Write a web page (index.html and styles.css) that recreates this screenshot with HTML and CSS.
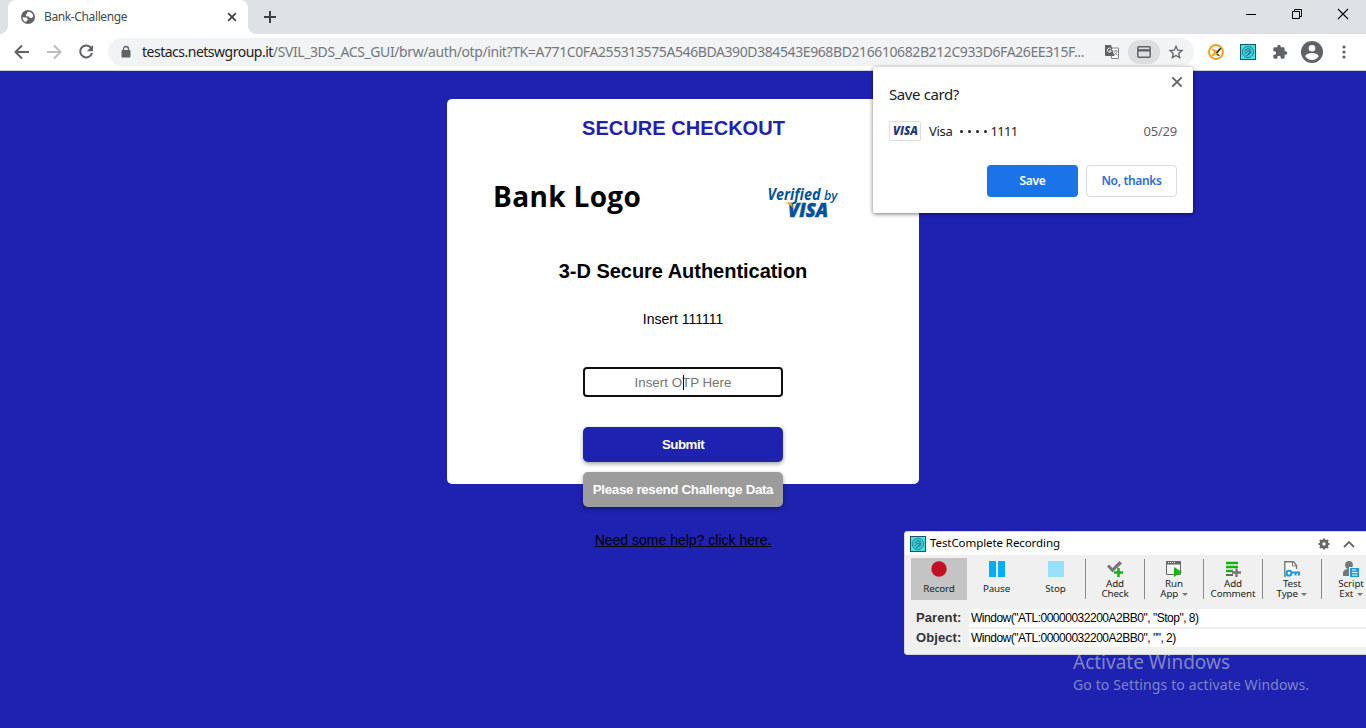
FILE: index.html
```html
<!DOCTYPE html>
<html lang="en">
<head>
<meta charset="utf-8">
<title>Bank-Challenge</title>
<link rel="stylesheet" href="styles.css">
</head>
<body>
<svg class="defs" width="0" height="0">
  <defs>
    <symbol id="hex" viewBox="0 0 16 16">
      <rect x=".5" y=".5" width="15" height="15" fill="#45e0e8" stroke="#17556b"/>
      <path d="M8 2.200l3.600 1 2 3-.2 3.800-2.400 2.800-3 1.200-3.300-1.200L2.500 10l-.2-3.600 2.200-3z" fill="#3fc8d3" stroke="#16798c" stroke-width=".8"/>
      <path d="M4.500 7l3.500-2.500L11 6M5 9.500L8 7l3 .5-3 2.500M6 12l5-3.200" fill="none" stroke="#14707f" stroke-width=".9"/>
    </symbol>
  </defs>
</svg>
<div class="screen">
  <header class="tabstrip">
    <div class="tab">
      <svg class="globe" width="14" height="14" viewBox="0 0 14 14"><circle cx="7" cy="7" r="7" fill="#5f6368"/><path d="M7.500 1.600Q5.800 2 6 3.500L4.800 5 5 6.200l2.600.3 1 1.300 2.200.2 1.500-1.600Q12 2.700 7.500 1.600z" fill="#fff"/><path d="M1.500 7.200l3.800.3 1.500 1.600-.3 1.200L5.300 11l-.2 1.300Q1.800 11 1.500 7.200z" fill="#fff"/></svg>
      <span class="tab-title">Bank-Challenge</span>
      <svg class="tab-close" width="10" height="10" viewBox="0 0 10 10"><path d="M1.200 1.200l7.600 7.600M8.800 1.200L1.200 8.800" stroke="#3c4043" stroke-width="1.700"/></svg>
    </div>
    <svg class="new-tab" width="12" height="12" viewBox="0 0 12 12"><path d="M6 0v12M0 6h12" stroke="#3c4043" stroke-width="2"/></svg>
    <div class="window-buttons">
      <svg width="12" height="12" viewBox="0 0 12 12"><path d="M1 5.500h10" stroke="#000"/></svg>
      <svg width="12" height="12" viewBox="0 0 12 12"><path d="M1.500 2.500h7v7h-7zM3.500 2.500v-2h7v7h-2" fill="none" stroke="#000"/></svg>
      <svg width="12" height="12" viewBox="0 0 12 12"><path d="M1 0l10 10M11 0L1 10" stroke="#000" stroke-width="1.100"/></svg>
    </div>
  </header>

  <nav class="toolbar">
    <svg class="nav-icon" width="16" height="16" viewBox="0 0 16 16"><path d="M15 8H2M8 1.500L1.500 8 8 14.500" fill="none" stroke="#5f6368" stroke-width="2"/></svg>
    <svg class="nav-icon" width="16" height="16" viewBox="0 0 16 16"><path d="M1 8h13M8 1.500L14.500 8 8 14.500" fill="none" stroke="#bbbdc0" stroke-width="2"/></svg>
    <svg class="nav-icon" width="16" height="16" viewBox="0 0 16 16"><path d="M13.300 4.300A6 6 0 1 0 14 8.900" fill="none" stroke="#5f6368" stroke-width="2"/><path d="M15 1v6.200H8.800z" fill="#5f6368"/></svg>
    <div class="omnibox">
      <svg class="lock" width="10" height="12" viewBox="0 0 10 12"><rect x="0.500" y="4" width="9" height="7.500" rx="1" fill="#5f6368"/><path d="M2.500 5V3a2.500 2.500 0 0 1 5 0v2" fill="none" stroke="#5f6368" stroke-width="1.300"/></svg>
      <span class="url"><b>testacs.netswgroup.it</b>/SVIL_3DS_ACS_GUI/brw/auth/otp/init?TK=A771C0FA255313575A546BDA390D384543E968BD216610682B212C933D6FA26EE315F...</span>
      <svg class="translate" width="14" height="14" viewBox="0 0 14 14"><path d="M5.500 3h8v10.500h-7z" fill="#fff" stroke="#80868b"/><path d="M0 0h6l3.300 11H1a1 1 0 0 1-1-1z" fill="#5f6368"/><path d="M5.800 3.800a2 2 0 1 0 .5 2H4.400" fill="none" stroke="#fff"/><path d="M8.500 6h4.300M10.700 5v1M12 6c-.3 2-1.500 3.300-3 4.200M9.300 7.400l3 3" stroke="#80868b" fill="none" stroke-width=".9"/></svg>
      <span class="card-pill"><svg width="14" height="12" viewBox="0 0 14 12"><rect x=".8" y=".8" width="12.400" height="10.400" rx="1" fill="none" stroke="#5f6368" stroke-width="1.500"/><path d="M1 4.300h12" stroke="#5f6368" stroke-width="2.400"/></svg></span>
      <svg class="star" width="14" height="14" viewBox="0 0 14 14"><path d="M7 1.300l1.700 3.900 4.200.4-3.200 2.800 1 4.200L7 10.400l-3.700 2.200 1-4.200L1.100 5.600l4.200-.4z" fill="none" stroke="#5f6368" stroke-width="1.300"/></svg>
    </div>
    <div class="extensions">
      <svg width="16" height="16" viewBox="0 0 16 16"><circle cx="8" cy="8" r="7" fill="#fff" stroke="#f59c1a" stroke-width="1.900"/><path d="M3 4.800l4 .7L9 6.500 12 4l1 .8-3 4.700L11 12 7.500 10.500 5 12.500l-1.500-1.500 2.500-2.500z" fill="#f5a623"/><path d="M12.800 4.200L8.500 9M9 10.500l2.500 1" stroke="#222" stroke-width="1.300"/></svg>
      <svg width="16" height="16"><use href="#hex"/></svg>
      <svg width="16" height="16" viewBox="0 0 24 24"><path d="M20.500 11H19V7a2 2 0 0 0-2-2h-4V3.500a2.500 2.500 0 0 0-5 0V5H4a2 2 0 0 0-2 2v3.800h1.500a2.700 2.700 0 0 1 0 5.400H2V20a2 2 0 0 0 2 2h3.800v-1.500a2.700 2.700 0 0 1 5.400 0V22H17a2 2 0 0 0 2-2v-4h1.500a2.500 2.500 0 0 0 0-5z" fill="#5f6368"/></svg>
      <svg class="avatar" width="22" height="22" viewBox="0 0 22 22"><circle cx="11" cy="11" r="11" fill="#5f6368"/><circle cx="11" cy="7.200" r="3.300" fill="#fff"/><path d="M4.400 15.500c0-2.300 4.400-3.400 6.600-3.400s6.600 1.100 6.600 3.400A8 8 0 0 1 11 19a8 8 0 0 1-6.600-3.500z" fill="#fff"/></svg>
      <svg class="menu" width="4" height="14" viewBox="0 0 4 14"><g fill="#5f6368"><circle cx="2" cy="2" r="1.600"/><circle cx="2" cy="7" r="1.600"/><circle cx="2" cy="12" r="1.600"/></g></svg>
    </div>
  </nav>

  <main class="page">
    <section class="checkout">
      <h1>SECURE CHECKOUT</h1>
      <div class="logos">
        <span class="bank-logo">Bank Logo</span>
        <svg class="vbv" width="74" height="40" viewBox="0 0 74 40">
          <g fill="#00529b" font-family="Open Sans, sans-serif" font-style="italic">
            <text x="1.500" y="20.500" font-size="16" font-weight="700" textLength="53" lengthAdjust="spacingAndGlyphs">Verified</text>
            <text x="58" y="20.500" font-size="13" font-weight="600" textLength="13.500" lengthAdjust="spacingAndGlyphs">by</text>
            <text x="22" y="37.500" font-size="19" font-weight="800" stroke="#00529b" stroke-width=".5" textLength="40" lengthAdjust="spacingAndGlyphs">VISA</text>
          </g>
          <path d="M18.500 23.500h5.500q1.800 0 2.100 1.700l.6 4q-2.200-4-8.200-5.700z" fill="#f9a51a"/>
        </svg>
      </div>
      <h2>3-D Secure Authentication</h2>
      <p class="instruction">Insert 111111</p>
      <div class="otp"><span>Insert OTP Here</span><i class="caret"></i></div>
      <button class="btn submit">Submit</button>
      <button class="btn resend">Please resend Challenge Data</button>
      <a class="help">Need some help? click here.</a>
    </section>
  </main>

  <aside class="save-card">
    <svg class="popup-close" width="12" height="12" viewBox="0 0 12 12"><path d="M1.300 1.300l9.400 9.400M10.700 1.300l-9.400 9.400" stroke="#5f6368" stroke-width="1.900"/></svg>
    <div class="popup-title">Save card?</div>
    <div class="card-row">
      <svg width="32" height="20" viewBox="0 0 32 20"><rect x=".5" y=".5" width="31" height="19" rx="1" fill="#fff" stroke="#dadce0"/><text x="4" y="14.300" font-family="Open Sans, sans-serif" font-style="italic" font-weight="800" font-size="12" fill="#1a3a80" textLength="25" lengthAdjust="spacingAndGlyphs">VISA</text></svg>
      <span class="visa-name">Visa</span><span class="dots"><i></i><i></i><i></i><i></i></span><span class="digits">1111</span>
      <span class="expiry">05/29</span>
    </div>
    <div class="popup-actions">
      <button class="save">Save</button>
      <button class="decline">No, thanks</button>
    </div>
  </aside>

  <div class="watermark"><div class="wm-title">Activate Windows</div><div class="wm-text">Go to Settings to activate Windows.</div></div>

  <aside class="recorder">
    <div class="rec-title">
      <svg width="16" height="16"><use href="#hex"/></svg>
      <span>TestComplete Recording</span>
      <svg class="gear" width="12" height="12" viewBox="0 0 12 12"><circle cx="6" cy="6" r="3.100" fill="none" stroke="#666" stroke-width="2.800"/><path d="M6 .5v2M6 9.500v2M.5 6h2M9.500 6h2M2 2l1.500 1.500M8.500 8.500L10 10M10 2L8.500 3.500M3.500 8.500L2 10" stroke="#666" stroke-width="2.200"/></svg>
      <svg class="chevron" width="12" height="8" viewBox="0 0 12 8"><path d="M1 7l5-5 5 5" fill="none" stroke="#666" stroke-width="1.800"/></svg>
    </div>
    <div class="tools">
      <div class="tool wide active"><svg width="16" height="16"><circle cx="8" cy="8" r="7.700" fill="#c41025"/></svg><span>Record</span></div>
      <div class="tool wide"><svg width="16" height="16"><path d="M0 0h7v16H0zM9 0h7v16H9z" fill="#00aeff"/></svg><span>Pause</span></div>
      <div class="tool wide"><svg width="16" height="16"><rect width="16" height="16" fill="#99dfff"/></svg><span>Stop</span></div>
      <div class="tool sep"><svg width="16" height="16"><path d="M0 5.500l2-2 3.500 3.500L12.500 0 15 2.500l-9.500 9z" fill="#777"/><path d="M7 11.500h9M11.500 7v9" stroke="#f0f0f0" stroke-width="4"/><path d="M7 11.500h9M11.500 7v9" stroke="#12b40c" stroke-width="2.500"/></svg><span>Add</span><span>Check</span></div>
      <div class="tool sep"><svg width="16" height="16"><path d="M.5.500h14v13H.5z" fill="#f6f6f6" stroke="#666"/><path d="M0 2h15" stroke="#666" stroke-width="3"/><path d="M2 1.500h7" stroke="#fff" stroke-dasharray="1"/><path d="M8 6l8 5-8 5z" fill="#16b80d"/></svg><span>Run</span><span>App <i class="drop"></i></span></div>
      <div class="tool sep"><svg width="16" height="16"><path d="M1 2h12M1 6h12" stroke="#12b40c" stroke-width="2.400"/><path d="M1 10h7" stroke="#12b40c" stroke-width="2.400"/><path d="M1 14h7" stroke="#666" stroke-width="2"/><path d="M7 11.500h9M11.500 7.500V16" stroke="#777" stroke-width="2.400"/></svg><span>Add</span><span>Comment</span></div>
      <div class="tool sep"><svg width="16" height="16"><path d="M.8.800h8.700L12.500 4.500V15H.8z" fill="#fff" stroke="#777" stroke-width="1.400"/><path d="M8.500 .8v4.200h4" fill="none" stroke="#777"/><path d="M2 8h14v8H2z" fill="#f5f5f5"/><circle cx="5" cy="12.200" r="2.400" fill="#fff" stroke="#139ce8" stroke-width="2"/><path d="M8 11.500h8M11.500 11.500v3M15 11.500v3" stroke="#139ce8" stroke-width="2"/></svg><span>Test</span><span>Type <i class="drop"></i></span></div>
      <div class="tool sep"><svg width="16" height="16"><circle cx="6" cy="4" r="3.900" fill="#777"/><path d="M0 15v-3q0-3 4-4h6v7z" fill="#777"/><path d="M6 6h10v10H6z" fill="#f0f0f0"/><path d="M7 7h9v9H7z" fill="#139ce8"/><path d="M9 9h4M9 11.500h5.500M9 14h5.500" stroke="#fff"/></svg><span>Script</span><span>Ext <i class="drop"></i></span></div>
    </div>
    <div class="field"><b>Parent:</b><span>Window("ATL:00000032200A2BB0", "Stop", 8)</span></div>
    <div class="field"><b>Object:</b><span>Window("ATL:00000032200A2BB0", "", 2)</span></div>
  </aside>
</div>
</body>
</html>
```
FILE: styles.css
```css
* { box-sizing: border-box; }
body { margin: 0; font-family: "Liberation Sans", Arial, sans-serif; }
svg { display: block; flex: none; overflow: visible; }
button { font: inherit; padding: 0; }
.defs { position: absolute; }
.screen { position: relative; width: 1366px; height: 728px; overflow: hidden; background: #1e22b0; display: flex; flex-direction: column; }

.tabstrip { height: 34px; flex: none; background: #dee1e6; display: flex; align-items: flex-start; }
.tab { position: relative; width: 240px; height: 34px; margin-left: 8px; padding: 0 11px 0 13px; background: #fff; border-radius: 8px 8px 0 0; display: flex; align-items: center; }
.tab::before, .tab::after { content: ""; position: absolute; bottom: 0; width: 8px; height: 8px; }
.tab::before { left: -8px; background: radial-gradient(circle at 0 0, #dee1e6 7.500px, #fff 8px); }
.tab::after { right: -8px; background: radial-gradient(circle at 100% 0, #dee1e6 7.500px, #fff 8px); }
.tab-title { font: 12px/34px "Noto Sans", sans-serif; color: #45494d; margin-left: 9px; letter-spacing: -.38px; flex: 1; white-space: nowrap; }
.new-tab { margin: 11px 0 0 16px; }
.window-buttons { margin: 9px 17px 0 auto; display: flex; gap: 34px; }

.toolbar { height: 37px; flex: none; background: #fff; border-bottom: 1px solid #cdd0dc; display: flex; align-items: center; padding-left: 14px; }
.nav-icon { margin-right: 16px; }
.omnibox { width: 1086px; height: 28px; margin-left: -2px; border-radius: 14px; background: #f1f3f4; display: flex; align-items: center; padding-left: 13px; }
.url { width: 960px; margin-left: 11px; font: 14px/28px "Noto Sans", sans-serif; color: #74787c; letter-spacing: -.404px; white-space: nowrap; }
.url b { font-weight: 400; color: #202124; letter-spacing: -.5px; }
.translate { margin-left: 3px; }
.card-pill { width: 32px; height: 24px; margin-left: 9px; border-radius: 12px; background: #dcdee0; display: grid; place-items: center; }
.star { margin-left: 9px; }
.extensions { display: flex; align-items: center; gap: 16px; margin-left: 14px; }
.avatar { margin: 0 2px 0 -3px; }
.menu { margin-left: 1px; }

.page { flex: 1; padding-top: 28px; }
.checkout { width: 472px; height: 385px; margin: 0 auto; background: #fff; border-radius: 5px; display: flex; flex-direction: column; align-items: center; }
h1 { margin: 17px 0 0; padding-left: 1px; font-size: 20px; line-height: 24px; color: #1e22b0; white-space: nowrap; letter-spacing: .05px; }
.logos { width: 100%; height: 44px; flex: none; margin-top: 37px; padding: 0 79px 0 46px; display: flex; justify-content: space-between; align-items: flex-start; }
.bank-logo { font: 700 28px/38px "Open Sans", sans-serif; color: #000; letter-spacing: .35px; white-space: nowrap; }
.vbv { margin-top: 2px; }
h2 { margin: 38px 0 0; font-size: 20px; line-height: 24px; color: #000; letter-spacing: -.03px; white-space: nowrap; }
.instruction { margin: 28px 0 0; font-size: 14px; line-height: 16px; color: #000; }
.otp { position: relative; width: 200px; height: 30px; flex: none; margin-top: 40px; border: 2px solid #101010; border-radius: 4px; font-size: 13.330px; line-height: 27px; text-align: center; color: #757575; }
.caret { position: absolute; left: 98px; top: 6px; width: 1px; height: 15px; background: #000; }
.btn { width: 200px; height: 35px; flex: none; border: 0; border-radius: 5px; color: #fff; font-size: 13.330px; font-weight: 700; line-height: 35px; letter-spacing: -.33px; box-shadow: 0 2px 4px rgba(0,0,0,.35); white-space: nowrap; }
.submit { margin-top: 30px; background: #1e22b0; letter-spacing: -.5px; }
.resend { margin-top: 10px; background: #9c9c9c; }
.help { margin-top: 25px; font-size: 14px; line-height: 16px; color: #000; text-decoration: underline; white-space: nowrap; }

.save-card { position: absolute; left: 873px; top: 67px; width: 320px; height: 146px; padding: 16px 16px 16px; background: #fff; border-radius: 2px; box-shadow: 0 1px 4px rgba(0,0,0,.55); font-family: "Noto Sans", sans-serif; color: #202124; }
.popup-close { position: absolute; right: 10px; top: 9px; }
.popup-title { font-size: 15px; line-height: 22px; letter-spacing: -.4px; }
.card-row { display: flex; align-items: center; height: 20px; margin-top: 16px; font-size: 13px; }
.visa-name { margin-left: 8px; letter-spacing: -.3px; }
.dots { display: flex; gap: 5px; margin: 0 3px 0 8px; }
.dots i { width: 3px; height: 3px; border-radius: 50%; background: #202124; }
.digits { letter-spacing: -.7px; }
.expiry { margin-left: auto; color: #5f6368; letter-spacing: -.2px; }
.popup-actions { display: flex; justify-content: flex-end; gap: 8px; margin-top: 24px; }
.popup-actions button { width: 91px; height: 32px; border-radius: 4px; font: 600 12px/30px "Noto Sans", sans-serif; letter-spacing: -.35px; }
.popup-actions .save { background: #1a73e8; color: #fff; border: 0; }
.popup-actions .decline { background: #fff; color: #2b6be0; border: 1px solid #dadce0; }

.watermark { position: absolute; left: 1073px; top: 650px; font-family: "Noto Sans", sans-serif; color: #8184c2; white-space: nowrap; }
.wm-title { font-size: 19px; line-height: 25px; }
.wm-text { font-size: 14px; line-height: 20px; letter-spacing: .12px; }

.recorder { position: absolute; left: 904px; top: 531px; width: 480px; height: 124px; background: #f0f0f0; border: 1px solid #d4d4dc; border-radius: 3px 0 0 3px; font-family: "Noto Sans", sans-serif; overflow: hidden; }
.rec-title { height: 23px; padding-left: 5px; background: #fff; display: flex; align-items: center; font-size: 11.500px; color: #000; }
.rec-title span { width: 388px; margin-left: 4px; line-height: 16px; padding-bottom: 2px; letter-spacing: -.08px; white-space: nowrap; }
.chevron { margin-left: 13px; }
.tools { display: flex; margin: 3px 0 0 6px; height: 42px; }
.tool { width: 59px; flex: none; display: flex; flex-direction: column; align-items: center; padding-top: 3px; font-size: 9.800px; line-height: 10px; color: #222; text-align: center; white-space: nowrap; }
.tool.active { width: 56px; background: #c4c4c4; }
.tool span { letter-spacing: -.1px; }
.tool.wide span { margin-top: 7px; }
.tool.sep { border-left: 1px solid #8a8a8a; height: 40px; margin-top: 1px; padding-top: 2px; }
.tool.sep svg { margin-bottom: 2px; }
.drop { display: inline-block; margin-left: 1px; border: 3px solid transparent; border-top-color: #777; border-bottom: 0; vertical-align: 1px; }
.field { display: flex; align-items: center; height: 17px; margin-top: 9px; }
.field + .field { margin-top: 3px; }
.field b { width: 53px; margin-left: 11px; font: 700 13px/17px "Liberation Sans", sans-serif; color: #333; letter-spacing: .1px; }
.field span { flex: 1; padding-left: 2px; background: #fff; font: 12px/18px "Liberation Sans", sans-serif; color: #000; letter-spacing: -.49px; white-space: nowrap; }
```
